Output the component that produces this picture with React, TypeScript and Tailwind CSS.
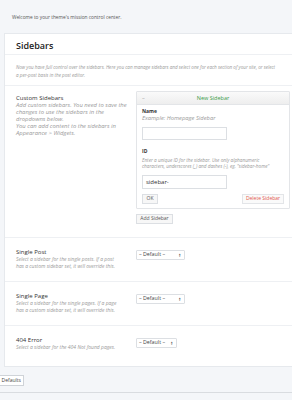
const Select = ({ width }: { width: string }) => (
  <div
    className={`flex h-[10px] items-center justify-between rounded-[1px] border border-[#dcdfe3] bg-white pl-[2px] pr-[3px] text-[5.3px] text-[#444] ${width}`}
  >
    <span>– Default –</span>
    <span className="flex flex-col text-[2.5px] leading-[2.5px] text-[#555]">
      <span>▲</span>
      <span>▼</span>
    </span>
  </div>
);

const Row = ({
  title,
  lines,
  children,
}: {
  title: string;
  lines: string[];
  children: React.ReactNode;
}) => (
  <div className="flex border-b border-[#eef0f3] pl-[11px] pt-[10px] pb-[11px]">
    <div className="w-[120px]">
      <div className="text-[6px] leading-[8px] text-[#333]">{title}</div>
      <div className="whitespace-nowrap text-[5px] italic leading-[7px] text-[#999]">
        {lines.map((l) => (
          <div key={l}>{l}</div>
        ))}
      </div>
    </div>
    <div className="pt-[2px]">{children}</div>
  </div>
);

export default function App() {
  return (
    <div
      className="relative h-[400px] w-[292px] overflow-hidden bg-[#f4f6f9]"
      style={{ fontFamily: '"Open Sans", "Liberation Sans", sans-serif' }}
    >
      <div className="flex h-[33px] items-center pl-[12px] pt-[2px] text-[4.8px] text-[#555]">
        Welcome to your theme's mission control center.
      </div>

      <div className="ml-[4px] w-[420px] border border-[#e6e9ed] bg-white">
        <div className="flex h-[21px] items-center border-b border-[#eef0f3] pl-[11px] pt-[3px] text-[9px] font-semibold text-[#222]">
          Sidebars
        </div>
        <div className="border-b border-[#eef0f3] pl-[11px] pt-[8px] pb-[6px] text-[4.6px] italic leading-[8px] text-[#999]">
          <div className="whitespace-nowrap">
            Now you have full control over the sidebars. Here you can manage sidebars and select one for each section of your site, or select
          </div>
          <div>a per-post basis in the post editor.</div>
        </div>

        <div className="flex border-b border-[#eef0f3] pl-[11px] pt-[5px] pb-[13px]">
          <div className="w-[120px] pt-[3px]">
            <div className="text-[6px] leading-[8px] text-[#333]">Custom Sidebars</div>
            <div className="whitespace-nowrap text-[5.9px] italic leading-[7px] text-[#999]">
              <div>Add custom sidebars. You need to save the</div>
              <div>changes to use the sidebars in the</div>
              <div>dropdowns below.</div>
              <div>You can add content to the sidebars in</div>
              <div>Appearance &gt; Widgets.</div>
            </div>
          </div>
          <div>
            <div className="w-[154px] rounded-[1px] border border-[#e3e5e8] bg-white">
              <div className="relative flex h-[13px] items-center justify-center border-b border-[#e3e5e8] bg-gradient-to-b from-[#fafafa] to-[#eeeeee] text-[5.5px] text-[#3a9d4a]">
                <span className="absolute left-[5px] text-[#999]">–</span>
                New Sidebar
              </div>
              <div className="px-[5px] pt-[3px] pb-[4px]">
                <div className="text-[5px] font-bold leading-[7px] text-[#333]">Name</div>
                <div className="text-[5.8px] italic leading-[7px] text-[#999]">Example: Homepage Sidebar</div>
                <div className="mt-[5px] h-[13px] w-[85px] border border-[#dcdfe3] bg-white" />
                <div className="mt-[8px] text-[5px] font-bold leading-[7px] text-[#333]">ID</div>
                <div className="mt-[3px] whitespace-nowrap text-[4.7px] italic leading-[5.5px] text-[#999]">
                  <div>Enter a unique ID for the sidebar. Use only alphanumeric</div>
                  <div>characters, underscores (_) and dashes (-), eg. "sidebar-home"</div>
                </div>
                <div className="mt-[6px] flex h-[14px] w-[85px] items-center border border-[#dcdfe3] bg-white pl-[3px] text-[6px] text-[#333]">
                  sidebar-
                </div>
                <div className="mt-[5px] flex items-center justify-between">
                  <div className="flex h-[10px] w-[16px] items-center justify-center border border-[#dcdfe3] bg-[#f7f7f7] text-[5px] text-[#555]">
                    OK
                  </div>
                  <div className="flex h-[10px] w-[42px] items-center justify-center border border-[#e3e5e8] bg-[#fafafa] text-[5px] text-[#e2574c]">
                    Delete Sidebar
                  </div>
                </div>
              </div>
            </div>
            <div className="mt-[5px] flex h-[10px] w-[37px] items-center justify-center border border-[#dcdfe3] bg-[#f7f7f7] text-[5px] text-[#555]">
              Add Sidebar
            </div>
          </div>
        </div>

        <Row
          title="Single Post"
          lines={["Select a sidebar for the single posts. If a post", "has a custom sidebar set, it will override this."]}
        >
          <Select width="w-[49px]" />
        </Row>
        <Row
          title="Single Page"
          lines={["Select a sidebar for the single pages. If a page", "has a custom sidebar set, it will override this."]}
        >
          <Select width="w-[49px]" />
        </Row>
        <div className="flex pl-[11px] pt-[10px] pb-[15px]">
          <div className="w-[120px]">
            <div className="text-[6px] leading-[8px] text-[#333]">404 Error</div>
            <div className="whitespace-nowrap text-[5px] italic leading-[7px] text-[#999]">
              Select a sidebar for the 404 Not found pages.
            </div>
          </div>
          <div className="pt-[2px]">
            <Select width="w-[41px]" />
          </div>
        </div>
      </div>

      <div className="mt-[8px] flex h-[11px] w-[24px] items-center justify-end border border-l-0 border-[#cfd3d8] bg-white pr-[2px] text-[5px] text-[#444]">
        Defaults
      </div>
      <div className="mt-[6px] border-t border-[#d9dce0]" />
    </div>
  );
}
